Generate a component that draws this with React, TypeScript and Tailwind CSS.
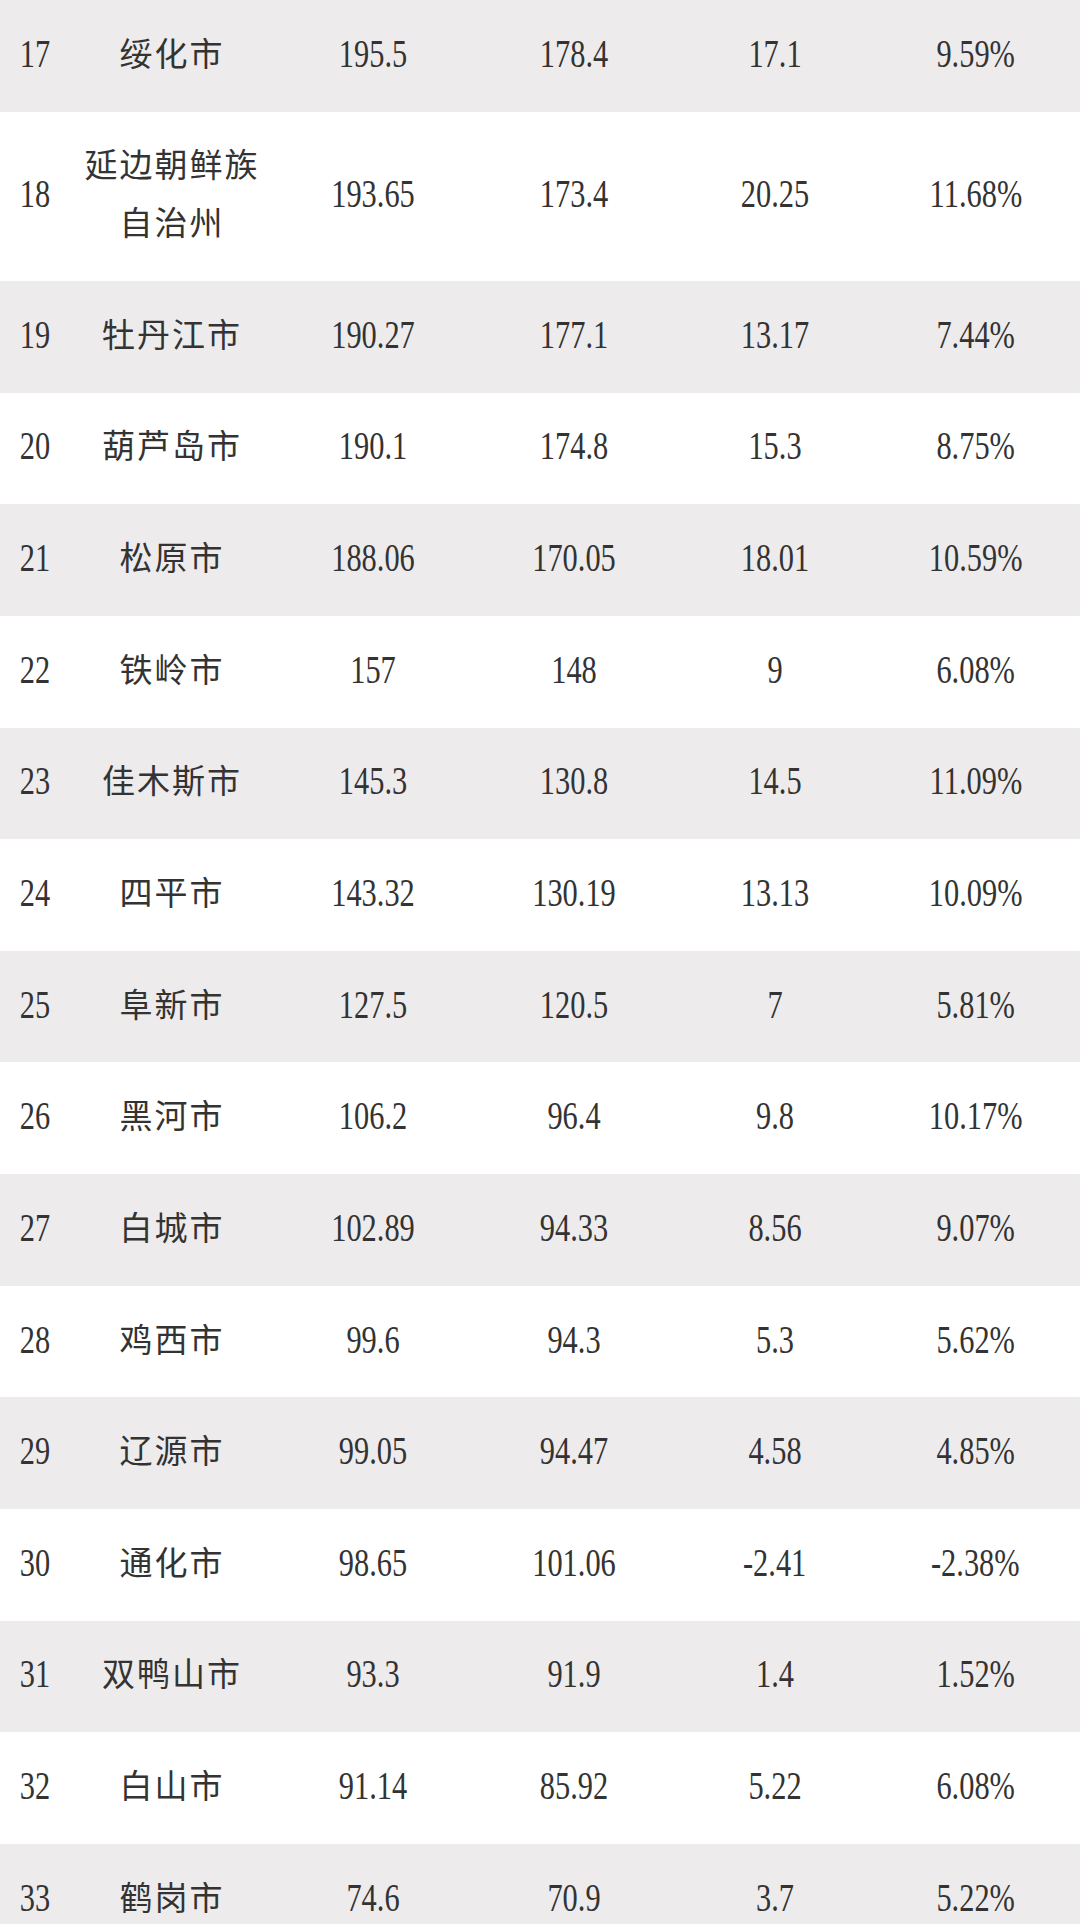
const rows: [string, string, string, string, string, string][] = [
  ['17', '绥化市', '195.5', '178.4', '17.1', '9.59%'],
  ['18', '延边朝鲜族\n自治州', '193.65', '173.4', '20.25', '11.68%'],
  ['19', '牡丹江市', '190.27', '177.1', '13.17', '7.44%'],
  ['20', '葫芦岛市', '190.1', '174.8', '15.3', '8.75%'],
  ['21', '松原市', '188.06', '170.05', '18.01', '10.59%'],
  ['22', '铁岭市', '157', '148', '9', '6.08%'],
  ['23', '佳木斯市', '145.3', '130.8', '14.5', '11.09%'],
  ['24', '四平市', '143.32', '130.19', '13.13', '10.09%'],
  ['25', '阜新市', '127.5', '120.5', '7', '5.81%'],
  ['26', '黑河市', '106.2', '96.4', '9.8', '10.17%'],
  ['27', '白城市', '102.89', '94.33', '8.56', '9.07%'],
  ['28', '鸡西市', '99.6', '94.3', '5.3', '5.62%'],
  ['29', '辽源市', '99.05', '94.47', '4.58', '4.85%'],
  ['30', '通化市', '98.65', '101.06', '-2.41', '-2.38%'],
  ['31', '双鸭山市', '93.3', '91.9', '1.4', '1.52%'],
  ['32', '白山市', '91.14', '85.92', '5.22', '6.08%'],
  ['33', '鹤岗市', '74.6', '70.9', '3.7', '5.22%'],
]

function Num({ value }: { value: string }) {
  return (
    <span className="inline-block scale-x-[0.76] font-['Liberation_Serif',serif] text-[40px] leading-none text-[#333]">
      {value}
    </span>
  )
}

export default function App() {
  return (
    <div className="w-[1080px] bg-white">
      {rows.map((r, i) => {
        const tall = r[1].includes('\n')
        return (
          <div
            key={r[0]}
            className={`grid grid-cols-[70px_202px_201px_201px_201px_201px] items-center text-center pb-[4px] ${
              i % 2 === 0 ? 'bg-[#eeebec]' : 'bg-white'
            } ${tall ? 'h-[169.3px]' : 'h-[111.65px]'}`}
          >
            <div><Num value={r[0]} /></div>
            <div className="flex flex-col items-center pb-[4px] pl-[2px] font-['Noto_Sans_CJK_SC',sans-serif] text-[33px] leading-[58px] tracking-[2px] text-[#333]">
              {r[1].split('\n').map((line) => (
                <span key={line}>{line}</span>
              ))}
            </div>
            <div><Num value={r[2]} /></div>
            <div><Num value={r[3]} /></div>
            <div><Num value={r[4]} /></div>
            <div><Num value={r[5]} /></div>
          </div>
        )
      })}
    </div>
  )
}
